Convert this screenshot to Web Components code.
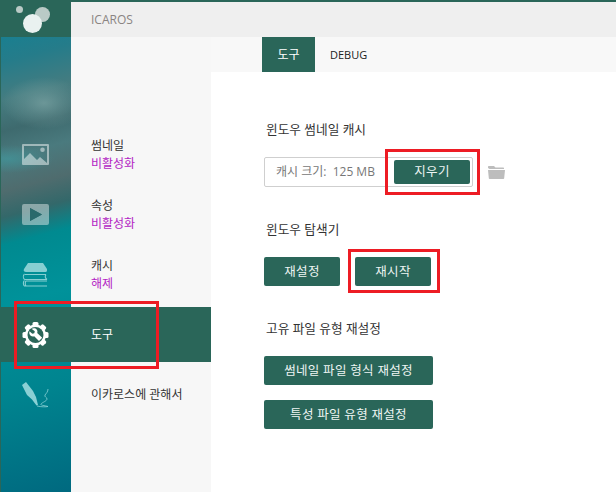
<!DOCTYPE html>
<html lang="ko">
<head>
<meta charset="utf-8">
<title>ICAROS</title>
<style>
  html, body { margin:0; padding:0; background:#fff; }
  body { font:12px/16px "Open Sans","Noto Sans CJK KR",sans-serif; color:#333; }
</style>
</head>
<body>
<icaros-app>
  <icaros-nav slot="nav">
    <nav-item label="썸네일" state="비활성화">
      <svg slot="icon" width="27" height="21" viewBox="0 0 27 21"><path fill="#fff" fill-opacity=".48" fill-rule="evenodd" d="M1 0h25a1 1 0 0 1 1 1v19a1 1 0 0 1-1 1H1a1 1 0 0 1-1-1V1a1 1 0 0 1 1-1zM2 2v13l6-6 7 7 3-3 7 6V2zM20.500 3.500a2.300 2.300 0 1 1 0 4.600 2.300 2.300 0 0 1 0-4.600z"/></svg>
    </nav-item>
    <nav-item label="속성" state="비활성화">
      <svg slot="icon" width="27" height="21" viewBox="0 0 27 21"><path fill="#fff" fill-opacity=".42" fill-rule="evenodd" d="M2 0h23a2 2 0 0 1 2 2v17a2 2 0 0 1-2 2H2a2 2 0 0 1-2-2V2a2 2 0 0 1 2-2zM8 4v13l12-6.500z"/><path fill="#2a6a6c" d="M8 4v13l12-6.500z"/></svg>
    </nav-item>
    <nav-item label="캐시" state="해제">
      <svg slot="icon" width="27" height="24" viewBox="0 0 27 24"><g fill="none" stroke="#86cfd2" stroke-width="1.100"><path d="M3 11.500h21M2.500 16.500H25M24 11.500c-1 1.500-1 3.500 1 5M2.500 11c-1.500 1.500-1.500 4 0 5.500M2.500 17.500c-1.500 1-1.500 4.500 0 5.500H25M25 18H4c-1 1-1 4 0 5"/></g><path fill="#86cfd2" d="M6 0h15l4 6v1.500c0 1-1 1.500-2 1.500H4c-1.500 0-3-1-2-3z"/></svg>
    </nav-item>
    <nav-item label="도구" selected>
      <svg slot="icon" width="27" height="26" viewBox="0 0 27 26">
        <g fill="#fff">
          <circle cx="13.500" cy="13" r="10.500"/>
          <rect x="10.500" y="0" width="6" height="26" rx="1.500"/>
          <rect x="10.500" y="0" width="6" height="26" rx="1.500" transform="rotate(45 13.500 13)"/>
          <rect x="10.500" y="0" width="6" height="26" rx="1.500" transform="rotate(90 13.500 13)"/>
          <rect x="10.500" y="0" width="6" height="26" rx="1.500" transform="rotate(135 13.500 13)"/>
        </g>
        <circle cx="13.500" cy="13" r="8" fill="#2a6659"/>
        <path fill="#fff" d="M9.500 6.800c2-.9 4.300-.6 5.300.9.800 1.100.8 2.300.4 3.300l5 4.800-3.200 3.200-4.800-4.800c-1.200.4-2.500.3-3.500-.5-1.300-1-1.800-2.900-1.200-4.500l2.800 2.600 2-.6.500-2z"/>
      </svg>
    </nav-item>
    <nav-item label="이카로스에 관해서">
      <svg slot="icon" width="27" height="27" viewBox="0 0 27 27"><path fill="#8ad0d4" d="M0 4 4 1l7 9 3 6 2 8-1.500.500-4.500-6-5-4.500z"/><path fill="none" stroke="#8ad0d4" stroke-width=".8" d="M15 25c4 1 9 1 11 .5-3-1-8-1-7-2.500 1-1.500 6-3 6-5 0-2-3-2-2-4 1-1.500 3-3 3-6"/></svg>
    </nav-item>
  </icaros-nav>
  <icaros-tabs slot="tabs">
    <tab-button active>도구</tab-button>
    <tab-button>DEBUG</tab-button>
  </icaros-tabs>
  <tool-section heading="윈도우 썸네일 캐시">
    <cache-box>
      캐시 크기:&nbsp; 125 MB
      <icaros-button slot="action" w="76" h="24">지우기</icaros-button>
    </cache-box>
  </tool-section>
  <tool-section heading="윈도우 탐색기">
    <icaros-button w="76">재설정</icaros-button>
    <icaros-button w="76">재시작</icaros-button>
  </tool-section>
  <tool-section heading="고유 파일 유형 재설정" stack>
    <icaros-button w="169">썸네일 파일 형식 재설정</icaros-button>
    <icaros-button w="169">특성 파일 유형 재설정</icaros-button>
  </tool-section>
  <mark-box slot="marks" x="14" y="301" w="145" h="68"></mark-box>
  <mark-box slot="marks" x="385" y="149" w="95" h="46"></mark-box>
  <mark-box slot="marks" x="348" y="249" w="92" h="44"></mark-box>
</icaros-app>

<script>
(()=>{
  const GREEN = "#2a6659";

  const make = (name, html, extra={})=>{
    const template = document.createElement("template");
    template.innerHTML = html;
    class El extends HTMLElement {
      connectedCallback(){
        if(this.shadowRoot) return;
        const root = this.attachShadow({mode:"open"});
        root.appendChild(template.content.cloneNode(true));
        if(extra.ready) extra.ready(this, root);
      }
    }
    customElements.define(name, El);
  };

  make("icaros-app", `
    <style>
      :host { display:grid; grid-template-columns:211px 1fr; grid-template-rows:35px 35px 1fr;
        width:616px; height:492px; box-sizing:border-box; border-top:2px solid ${GREEN};
        position:relative; overflow:hidden; background:#fff; }
      header { grid-column:1 / 3; display:flex; background:#efefef; }
      .logo { width:71px; background:${GREEN}; flex:none; }
      .logo svg { display:block; }
      .name { padding-left:20px; font-size:12px; line-height:35px; color:#8a8482; }
      .nav { grid-row:2 / 4; display:flex; }
      .tabs { display:flex; }
      main { padding:49px 0 0 53px; display:flex; flex-direction:column; gap:34px; }
    </style>
    <header>
      <div class="logo">
        <svg width="71" height="35" viewBox="0 0 71 35">
          <circle cx="19.500" cy="7.500" r="3.500" fill="#b9cac6"/>
          <circle cx="42.500" cy="12.500" r="7.500" fill="#b9cac6"/>
          <circle cx="32.500" cy="21.500" r="9.500" fill="#e9f1f0"/>
        </svg>
      </div>
      <div class="name">ICAROS</div>
    </header>
    <div class="nav"><slot name="nav"></slot></div>
    <div class="tabs"><slot name="tabs"></slot></div>
    <main><slot></slot></main>
    <slot name="marks"></slot>`);

  make("icaros-nav", `
    <style>
      :host { display:block; width:211px; box-sizing:border-box; padding-top:88px;
        background-color:#f7f7f7;
        background-image:
          linear-gradient(90deg, #2a6659 0, #2a6659 1px, transparent 1px),
          radial-gradient(ellipse 42px 26px at 44px 66px, rgba(125,165,165,.7) 0, rgba(125,165,165,.35) 45%, rgba(125,165,165,0) 100%),
          radial-gradient(ellipse 46px 14px at 8px 122px, rgba(65,150,155,.7), rgba(65,150,155,0)),
          linear-gradient(165deg, #1a7f90 0, #257c8a 25px, #457c80 62px, #3e6a6e 92px, #4a7a7e 118px, #4f6c6e 150px, #33686a 175px, #008a90 202px, #00929a 260px, #00848f 350px, #006a80 455px);
        background-size:71px 100%;
        background-repeat:no-repeat; }
    </style>
    <slot></slot>`);

  make("nav-item", `
    <style>
      :host { display:block; height:60px; box-sizing:border-box; padding:2px 0 3px; }
      .row { display:grid; grid-template-columns:71px 1fr; align-items:center; height:55px; }
      :host([selected]) .row { background:${GREEN}; color:#fff; }
      .icon { display:flex; justify-content:center; }
      ::slotted(svg) { display:block; }
      .text { padding-left:20px; line-height:18px; font-size:12px; }
      .state { color:#b31ec4; }
    </style>
    <div class="row">
      <div class="icon"><slot name="icon"></slot></div>
      <div class="text"><div class="label"></div><div class="state"></div></div>
    </div>`, {
    ready:(el, root)=>{
      root.querySelector(".label").textContent = el.getAttribute("label");
      const state = root.querySelector(".state");
      if(el.hasAttribute("state")) { state.textContent = el.getAttribute("state"); }
      else { state.remove(); }
    }
  });

  make("icaros-tabs", `
    <style>
      :host { display:flex; flex:1; background:#f8f8f8; padding-left:51px; gap:15px; }
    </style>
    <slot></slot>`);

  make("tab-button", `
    <style>
      :host { display:block; line-height:35px; font-size:11px; color:#222; }
      :host([active]) { background:${GREEN}; color:#fff; width:53px; text-align:center; font-size:12px; }
    </style>
    <slot></slot>`);

  make("tool-section", `
    <style>
      :host { display:block; }
      h2 { margin:0 0 20px 2px; font:inherit; font-size:12.700px; line-height:16px; color:#333; }
      .body { display:flex; gap:15px; align-items:flex-start; }
      :host([stack]) .body { flex-direction:column; }
    </style>
    <h2></h2>
    <div class="body"><slot></slot></div>`, {
    ready:(el, root)=>{ root.querySelector("h2").textContent = el.getAttribute("heading"); }
  });

  make("cache-box", `
    <style>
      :host { display:flex; align-items:center; gap:15px; }
      .box { display:flex; align-items:center; justify-content:space-between; box-sizing:border-box;
        width:209px; height:30px; border:1px solid #cfcfcf; border-radius:2px;
        padding:0 2px 0 11px; color:#777; font-size:12px; white-space:nowrap; }
      svg { display:block; }
    </style>
    <div class="box"><span><slot></slot></span><slot name="action"></slot></div>
    <svg width="17" height="13" viewBox="0 0 17 13"><path fill="#bdbdbd" d="M0 2V1c0-.6.400-1 1-1h5l1.500 1.500H15c.6 0 1 .4 1 1V3H1.500zM0 4h17l-.8 8c0 .6-.5 1-1 1H1.800c-.5 0-1-.4-1-1z"/></svg>`);

  make("icaros-button", `
    <style>
      :host { display:block; box-sizing:border-box; height:29px; background:${GREEN}; color:#eef5f3;
        border-radius:2px; text-align:center; line-height:29px; font-size:12.500px; letter-spacing:.3px; white-space:nowrap; }
    </style>
    <slot></slot>`, {
    ready:(el)=>{
      el.style.width = el.getAttribute("w")+"px";
      const h = el.getAttribute("h");
      if(h) { el.style.height = h+"px"; el.style.lineHeight = h+"px"; }
    }
  });

  // red annotations drawn over the screenshot
  make("mark-box", `
    <style>
      :host { position:absolute; box-sizing:border-box; border:3px solid #ed1c24; pointer-events:none; }
    </style>`, {
    ready:(el)=>{
      el.style.left = el.getAttribute("x")+"px";
      el.style.top = (el.getAttribute("y")-2)+"px";
      el.style.width = el.getAttribute("w")+"px";
      el.style.height = el.getAttribute("h")+"px";
    }
  });
})();
</script>
</body>
</html>
